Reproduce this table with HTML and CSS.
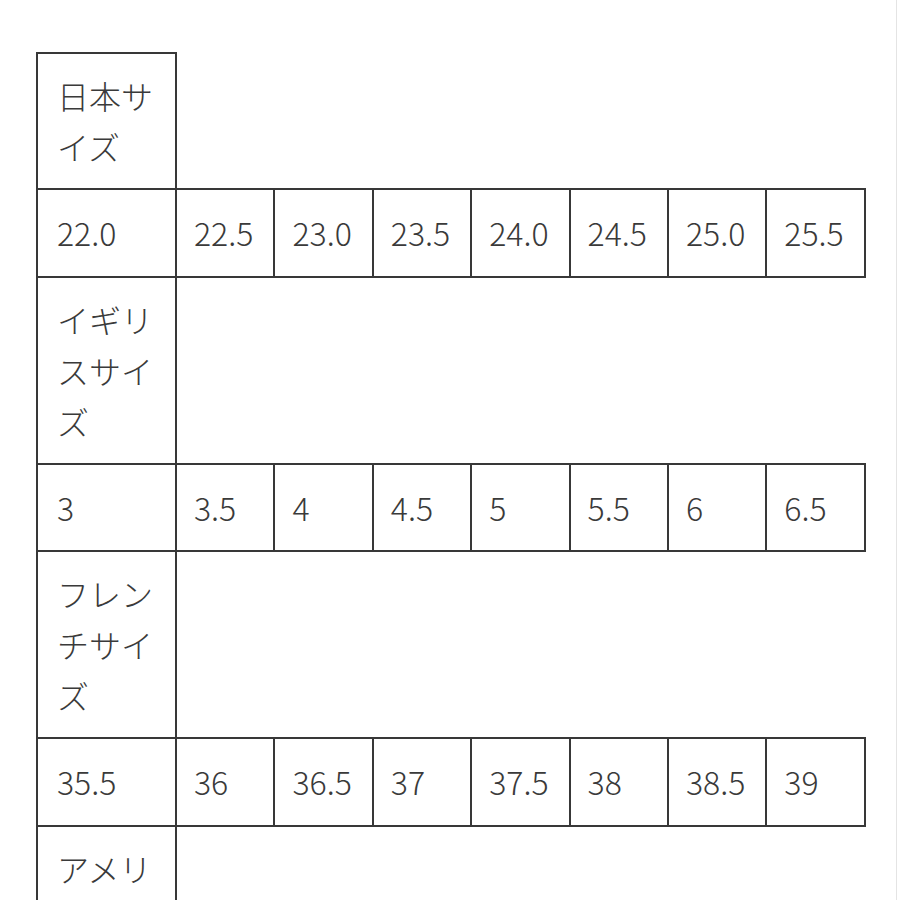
FILE: index.html
```html
<!DOCTYPE html>
<html lang="ja">
<head>
<meta charset="utf-8">
<link rel="stylesheet" href="styles.css">
</head>
<body>
<div class="page">
<table class="size-table">
<colgroup>
<col class="c-first">
<col class="c"><col class="c"><col class="c"><col class="c"><col class="c"><col class="c"><col class="c">
</colgroup>
<tbody>
<tr><td class="head">日本サイズ</td></tr>
<tr><td>22.0</td><td>22.5</td><td>23.0</td><td>23.5</td><td>24.0</td><td>24.5</td><td>25.0</td><td>25.5</td></tr>
<tr><td class="head">イギリスサイズ</td></tr>
<tr><td>3</td><td>3.5</td><td>4</td><td>4.5</td><td>5</td><td>5.5</td><td>6</td><td>6.5</td></tr>
<tr><td class="head">フレンチサイズ</td></tr>
<tr><td>35.5</td><td>36</td><td>36.5</td><td>37</td><td>37.5</td><td>38</td><td>38.5</td><td>39</td></tr>
<tr><td class="head">アメリカサイズ</td></tr>
<tr><td>5</td><td>5.5</td><td>6</td><td>6.5</td><td>7</td><td>7.5</td><td>8</td><td>8.5</td></tr>
</tbody>
</table>
</div>
</body>
</html>
```

FILE: styles.css
```css
html, body {
  margin: 0;
  padding: 0;
  background: #ffffff;
}
body {
  height: 900px;
  overflow: hidden;
}
.page {
  width: 897px;
  height: 900px;
  border-right: 1px solid #e4e4e4;
  padding: 52px 0 0 36px;
  box-sizing: border-box;
}
.size-table {
  border-collapse: collapse;
  table-layout: fixed;
  width: 828px;
  font-family: "Noto Sans CJK JP", "Noto Sans", sans-serif;
  font-weight: 300;
  font-size: 32px;
  line-height: 51px;
  color: #3a3a3a;
}
.c-first { width: 139px; }
.c { width: 98.4px; }
.size-table td {
  border: 2px solid #383838;
  padding: 17px 14px 17.5px 17px;
  vertical-align: top;
  white-space: nowrap;
  overflow: hidden;
}
.size-table td:first-child {
  padding-left: 19px;
}
.size-table td.head {
  white-space: normal;
  word-break: break-all;
  padding: 16px 10px 16px 19px;
}
```
